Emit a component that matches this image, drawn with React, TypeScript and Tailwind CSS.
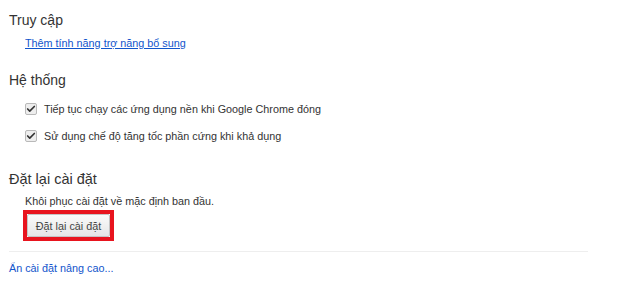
import { Check } from "lucide-react";

const CheckRow = ({ label }: { label: string }) => {
  return (
    <div className="flex h-[20px] items-center">
      <span className="flex h-[12px] w-[12px] items-center justify-center rounded-[2px] border border-[#b9b9b9] bg-[#eeeeee]">
        <Check className="h-[10px] w-[10px] text-[#333]" strokeWidth={4} />
      </span>
      <span className="ml-[7px] text-[#333]">{label}</span>
    </div>
  );
};

export default function App() {
  return (
    <div
      className="h-[296px] w-[620px] overflow-hidden bg-white pl-[9px] pt-[10px] text-[10.8px] leading-[14px]"
      style={{ fontFamily: '"Liberation Sans", Arial, sans-serif' }}
    >
      <section>
        <h3 className="text-[14px] leading-[20px] text-[#333]">Truy cập</h3>
        <div className="mt-[6px] h-[14px] pl-[16px]">
          <a href="#" className="text-[#15c] underline">
            Thêm tính năng trợ năng bổ sung
          </a>
        </div>
      </section>

      <section className="mt-[20px]">
        <h3 className="text-[14px] leading-[20px] text-[#333]">Hệ thống</h3>
        <div className="mt-[9px] flex flex-col gap-[7px] pl-[16px]">
          <CheckRow label="Tiếp tục chạy các ứng dụng nền khi Google Chrome đóng" />
          <CheckRow label="Sử dụng chế độ tăng tốc phần cứng khi khả dụng" />
        </div>
      </section>

      <section className="mt-[23px]">
        <h3 className="text-[14.5px] leading-[20px] text-[#333]">Đặt lại cài đặt</h3>
        <div className="pl-[14px]">
          <p className="mt-[5px] h-[14px] pl-[2px] text-[#333]">
            Khôi phục cài đặt về mặc định ban đầu.
          </p>
          <div className="mt-[2px] flex w-fit border-[4px] border-[#e8141e]">
            <button className="h-[23px] w-[83px] rounded-[2px] border border-[#c4c4c4] bg-gradient-to-b from-[#fafafa] to-[#e6e6e6] text-[10.8px] text-[#444]">
              Đặt lại cài đặt
            </button>
          </div>
        </div>
      </section>

      <div className="mt-[10px] h-px w-[579px] bg-[#eeeeee]" />

      <div className="mt-[9px] h-[14px]">
        <a href="#" className="text-[#15c]">
          Ẩn cài đặt nâng cao...
        </a>
      </div>
    </div>
  );
}
